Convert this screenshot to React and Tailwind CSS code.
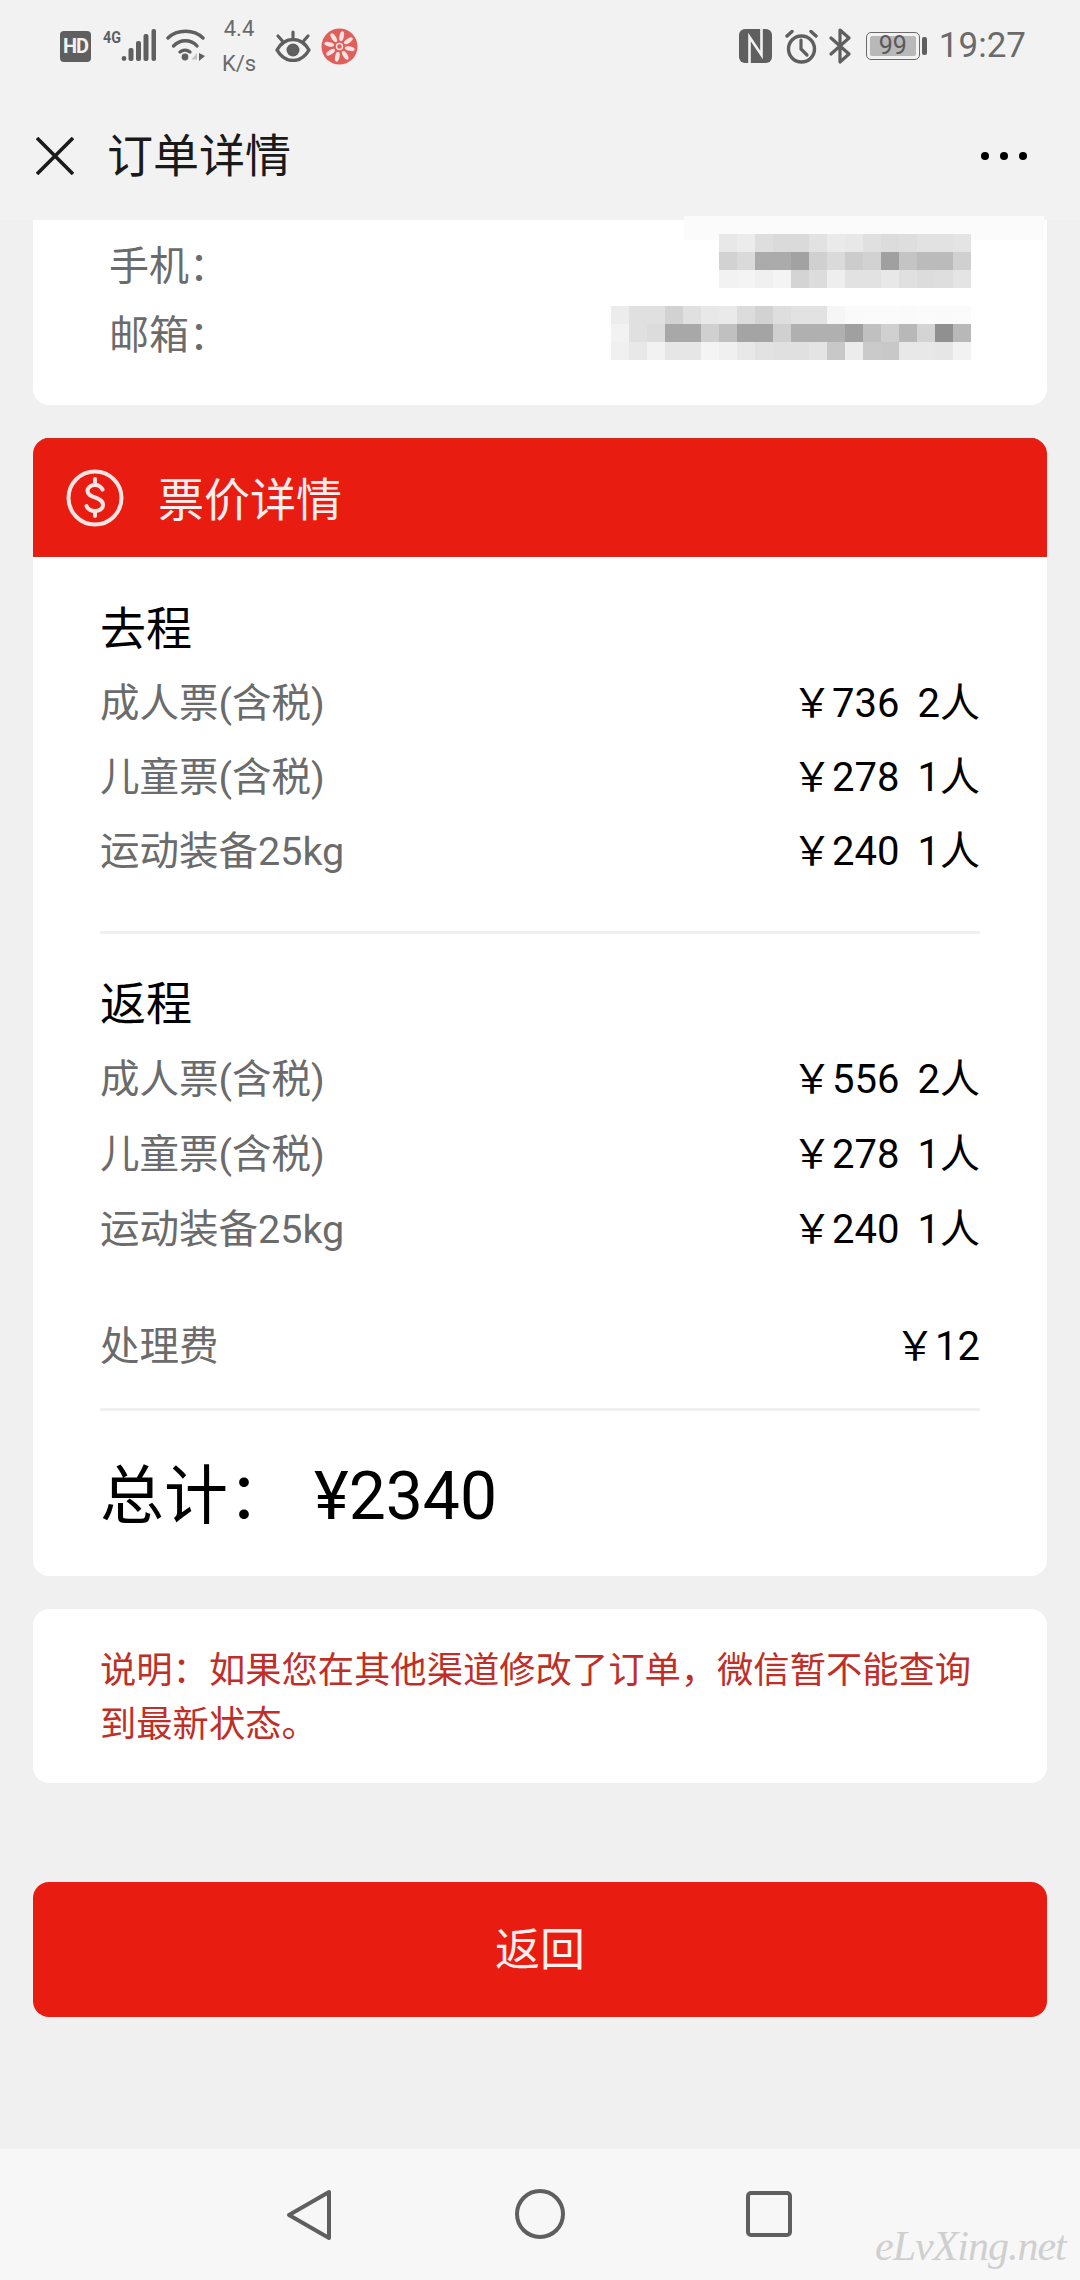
import React from 'react';

const phoneMosaic = [
  ['#e8e8e8', '#ececec', '#dedede', '#dadada', '#dadada', '#e2e2e2', '#eaeaea', '#e8e8e8', '#e0e0e0', '#dcdcdc', '#dedede', '#e2e2e2', '#e2e2e2', '#e4e4e4'],
  ['#d2d2d2', '#dadada', '#ababab', '#ababab', '#a2a2a2', '#d0d0d0', '#dadada', '#cccccc', '#d2d2d2', '#a0a0a0', '#c4c4c4', '#bbbbbb', '#bbbbbb', '#d0d0d0'],
  ['#f2f2f2', '#f4f4f4', '#f0f0f0', '#f4f4f4', '#d4d4d4', '#dcdcdc', '#eeeeee', '#e2e2e2', '#e2e2e2', '#e8e8e8', '#e0e0e0', '#dcdcdc', '#dedede', '#e4e4e4'],
];

const emailMosaic = [
  ['#ececec', '#e0e0e0', '#e0e0e0', '#d2d2d2', '#e0e0e0', '#e8e8e8', '#eaeaea', '#dcdcdc', '#d2d2d2', '#dedede', '#e2e2e2', '#e2e2e2', '#f6f6f6', '#fafafa', '#fbfbfb', '#fbfbfb', '#fafafa', '#fbfbfb', '#fafafa', '#fbfbfb'],
  ['#f2f2f2', '#e0e0e0', '#dcdcdc', '#a8a8a8', '#a8a8a8', '#d0d0d0', '#c0c0c0', '#a4a4a4', '#a4a4a4', '#d0d0d0', '#b0b0b0', '#b0b0b0', '#b0b0b0', '#a0a0a0', '#c0c0c0', '#d0d0d0', '#b8b8b8', '#d4d4d4', '#909090', '#b8b8b8'],
  ['#f0f0f0', '#e8e8e8', '#f2f2f2', '#e6e6e6', '#e6e6e6', '#f4f4f4', '#f0f0f0', '#e8e8e8', '#e2e2e2', '#e0e0e0', '#e0e0e0', '#e4e4e4', '#c8c8c8', '#ececec', '#cacaca', '#c8c8c8', '#e8e8e8', '#e8e8e8', '#e6e6e6', '#f2f2f2'],
];

function Mosaic({ rows, className }) {
  const size = 18;
  return (
    <svg className={className} width={rows[0].length * size} height={rows.length * size} shapeRendering="crispEdges">
      {rows.map((row, y) => row.map((c, x) => (
        <rect key={`${x}-${y}`} x={x * size} y={y * size} width={size} height={size} fill={c} />
      )))}
    </svg>
  );
}

function StatusLeft() {
  return (
    <div className="flex items-center text-[#5f5f5f]">
      <div className="w-[31px] h-[31px] rounded-[4px] bg-[#5f5f5f] text-[#f2f2f2] text-[20px] font-bold leading-[31px] text-center tracking-[-1px]">HD</div>
      <svg className="ml-[12px] mb-[4px]" width="53" height="38" viewBox="0 -4 53 38">
        <text x="0" y="14" fontSize="17" fontWeight="700" fill="#5f5f5f" fontFamily="Roboto" textLength="18" lengthAdjust="spacingAndGlyphs">4G</text>
        <circle cx="21" cy="29.500" r="2.400" fill="#5f5f5f" />
        <rect x="25.500" y="19" width="5" height="13" rx="2" fill="#5f5f5f" />
        <rect x="33" y="12" width="5" height="20" rx="2" fill="#5f5f5f" />
        <rect x="40.500" y="5" width="5" height="27" rx="2" fill="#5f5f5f" />
        <rect x="48.500" y="0" width="4.500" height="32" rx="2" fill="#5f5f5f" />
      </svg>
      <svg className="ml-[10px]" width="40" height="34" viewBox="0 0 40 34" fill="none" stroke="#5f5f5f" strokeLinecap="round">
        <path d="M2 9C11 0 28 0 37 9" strokeWidth="3.400" />
        <path d="M7.500 17C14 10 25 10 31 17" strokeWidth="3.400" />
        <path d="M14 23C17 20.500 21 20.500 24 23" strokeWidth="3.400" />
        <circle cx="19" cy="28" r="3.400" fill="#5f5f5f" stroke="none" />
        <path d="M31 24L25.500 30.500H31Z" fill="#c4c4c4" stroke="none" />
        <path d="M33 24V32L39 27Z" fill="#5f5f5f" stroke="none" />
      </svg>
      <div className="ml-[13px] w-[40px] text-center text-[22px] leading-[35px] text-[#6a6a6a]">
        <div>4.4</div>
        <div>K/s</div>
      </div>
      <svg className="ml-[16px]" width="36" height="32" viewBox="0 0 36 32" fill="none" stroke="#5f5f5f">
        <path d="M2 20C10 6 26 6 34 20C26 34 10 34 2 20Z" strokeWidth="3.400" strokeLinejoin="round" />
        <circle cx="18" cy="20" r="6.500" fill="#5f5f5f" stroke="none" />
        <path d="M18 2V7M3 6L7 10.500M33 6L29 10.500" strokeWidth="3.200" strokeLinecap="round" />
      </svg>
      <svg className="ml-[10px]" width="37" height="37" viewBox="0 0 37 37">
        <circle cx="18.500" cy="18.500" r="18" fill="#df5f5c" />
        <g fill="#fbe3e1">
          <ellipse cx="18.500" cy="8" rx="2.200" ry="5" transform="rotate(12 18.500 18.500)" />
          <ellipse cx="18.500" cy="8" rx="2.200" ry="5" transform="rotate(57 18.500 18.500)" />
          <ellipse cx="18.500" cy="8" rx="2.200" ry="5" transform="rotate(102 18.500 18.500)" />
          <ellipse cx="18.500" cy="8" rx="2.200" ry="5" transform="rotate(147 18.500 18.500)" />
          <ellipse cx="18.500" cy="8" rx="2.200" ry="5" transform="rotate(192 18.500 18.500)" />
          <ellipse cx="18.500" cy="8" rx="2.200" ry="5" transform="rotate(237 18.500 18.500)" />
          <ellipse cx="18.500" cy="8" rx="2.200" ry="5" transform="rotate(282 18.500 18.500)" />
          <ellipse cx="18.500" cy="8" rx="2.200" ry="5" transform="rotate(327 18.500 18.500)" />
        </g>
        <circle cx="18.500" cy="18.500" r="3" fill="none" stroke="#fbe3e1" strokeWidth="1.400" />
      </svg>
    </div>
  );
}

function StatusRight() {
  return (
    <div className="flex items-center text-[#5f5f5f]">
      <svg width="33" height="34" viewBox="0 0 33 34">
        <rect x="0" y="0" width="33" height="34" rx="6" fill="#5f5f5f" />
        <path d="M10.500 34V8L22.500 26V0" fill="none" stroke="#f2f2f2" strokeWidth="2.600" />
      </svg>
      <svg className="ml-[13px]" width="33" height="35" viewBox="0 0 33 35" fill="none" stroke="#5f5f5f" strokeLinecap="round">
        <circle cx="16.500" cy="20" r="13" strokeWidth="3.400" />
        <path d="M16 11V20L22 26" strokeWidth="3.200" />
        <path d="M2 7L7 2.500M31 7L26 2.500" strokeWidth="3.400" />
      </svg>
      <svg className="ml-[11px]" width="22" height="36" viewBox="0 0 22 36" fill="none" stroke="#5f5f5f" strokeWidth="3.200" strokeLinecap="round" strokeLinejoin="round">
        <path d="M2 10L20 26L11 34V2L20 10L2 26" />
      </svg>
      <div className="ml-[15px] w-[54px] h-[28px] rounded-[5px] border-[1.5px] border-[#6a6a6a] p-[3px]">
        <div className="h-full rounded-[2px] bg-[#b8b8b8] text-[#5a5a5a] text-[25px] leading-[19px] text-center">99</div>
      </div>
      <div className="ml-[2px] w-[5px] h-[18px] rounded-[2px] bg-[#5f5f5f]" />
      <div className="ml-[12px] text-[35px] leading-[40px] text-[#6a6a6a]">19:27</div>
    </div>
  );
}

function NavBar() {
  return (
    <div className="h-[128px] pl-[36px] pr-[53px] flex items-center">
      <svg width="38" height="38" viewBox="0 0 38 38" stroke="#1a1a1a" strokeWidth="3.600">
        <path d="M1 1L37 37M37 1L1 37" />
      </svg>
      <div className="ml-[33px] text-[46px] text-[#1a1a1a]">订单详情</div>
      <div className="ml-auto flex gap-[11px]">
        <div className="w-[8px] h-[8px] rounded-full bg-black" />
        <div className="w-[8px] h-[8px] rounded-full bg-black" />
        <div className="w-[8px] h-[8px] rounded-full bg-black" />
      </div>
    </div>
  );
}

function Row({ label, price, count, height = 'h-[74px]' }) {
  return (
    <div className={`${height} flex items-center justify-between`}>
      <div className="text-[39.5px] text-[#6b6b6b]">{label}</div>
      <div className="flex items-center text-[40px] text-black">
        <span>￥{price}</span>
        {count && <span className="ml-[18px]">{count}</span>}
      </div>
    </div>
  );
}

function Divider() {
  return <div className="h-[3px] bg-[#f0f0f0]" />;
}

function ContactCard() {
  return (
    <div className="relative h-[185px] bg-white rounded-b-[16px] pl-[76px] pr-[76px] pt-[13px] text-[40px] text-[#6b6b6b]">
      {/* off-white smear the screenshot has around the blurred values */}
      <div className="absolute right-[3px] top-[-4px] w-[360px] h-[24px] bg-[#fbfbfb]" />
      <div className="relative h-[67px] flex items-center justify-between">
        <div>手机：</div>
        <Mosaic rows={phoneMosaic} className="mb-[11px]" />
      </div>
      <div className="relative h-[71px] flex items-center justify-between">
        <div>邮箱：</div>
        <Mosaic rows={emailMosaic} className="mb-[5px]" />
      </div>
    </div>
  );
}

function PriceCard() {
  return (
    <div className="mt-[33px] h-[1138px] bg-white rounded-[16px] overflow-hidden">
      <div className="h-[119px] bg-[#e81c10] border-y-[2px] border-[#d2281e] pl-[33px] flex items-center">
        <svg width="58" height="58" viewBox="0 0 58 58" fill="none" stroke="#fbe4e2" strokeWidth="4">
          <circle cx="29" cy="29" r="26.500" />
          <path d="M36.500 20.500C35 17.500 32.500 16 29 16C25 16 21.500 18.500 21.500 22C21.500 29.500 37 27.500 37 36C37 39.500 33.500 42 29 42C25 42 22 40.500 20.500 37" strokeLinecap="round" />
          <path d="M29 10V16M29 42V47" strokeLinecap="round" />
        </svg>
        <div className="ml-[34px] mt-[5px] text-[46px] text-[#fdeeed]">票价详情</div>
      </div>
      <div className="px-[67px]">
        <div className="mt-[40px] mb-[6px] h-[64px] flex items-center text-[46px] text-black">去程</div>
        <Row label="成人票(含税)" price="736" count="2人" />
        <Row label="儿童票(含税)" price="278" count="1人" />
        <Row label="运动装备25kg" price="240" count="1人" />
        <div className="mt-[42px]"><Divider /></div>
        <div className="mt-[38px] mb-[6px] h-[64px] flex items-center text-[46px] text-black">返程</div>
        <Row label="成人票(含税)" price="556" count="2人" height="h-[75px]" />
        <Row label="儿童票(含税)" price="278" count="1人" height="h-[75px]" />
        <Row label="运动装备25kg" price="240" count="1人" height="h-[75px]" />
        <div className="mt-[43px]"><Row label="处理费" price="12" /></div>
        <div className="mt-[24px]"><Divider /></div>
        <div className="mt-[46px] h-[80px] flex items-center text-[64px] leading-none text-black">
          <span>总计：</span>
          <span className="ml-[22px] text-[66px]">¥2340</span>
        </div>
      </div>
    </div>
  );
}

function BottomBar() {
  return (
    <div className="relative h-[131px] bg-[#f7f7f7] flex items-start">
      <svg className="ml-[286px] mt-[40px]" width="46" height="52" viewBox="0 0 46 52" fill="none" stroke="#5f5f5f" strokeWidth="4" strokeLinejoin="round">
        <path d="M43 3V49L3 26Z" />
      </svg>
      <svg className="ml-[183px] mt-[40px]" width="50" height="50" viewBox="0 0 50 50" fill="none" stroke="#5f5f5f" strokeWidth="4">
        <circle cx="25" cy="25" r="23" />
      </svg>
      <svg className="ml-[181px] mt-[42px]" width="46" height="46" viewBox="0 0 46 46" fill="none" stroke="#5f5f5f" strokeWidth="4">
        <rect x="2" y="2" width="42" height="42" rx="3" />
      </svg>
      <div className="absolute left-[875px] top-[72px] font-['Liberation_Serif',serif] italic text-[42px] leading-[50px] tracking-[-1px] text-[#cfcfcf]">eLvXing.net</div>
    </div>
  );
}

export default function App() {
  return (
    <div className="w-[1080px] h-[2280px] flex flex-col bg-[#f0f0f0] font-[Roboto,'Noto_Sans_CJK_SC',sans-serif]">
      <div className="bg-[#f2f2f2]">
        <div className="h-[92px] pl-[60px] pr-[54px] flex items-center justify-between">
          <StatusLeft />
          <StatusRight />
        </div>
        <NavBar />
      </div>
      <div className="flex-1 px-[33px]">
        <ContactCard />
        <PriceCard />
        <div className="mt-[33px] h-[174px] bg-white rounded-[16px] pl-[67px] pr-[60px] pt-[35px] text-[36.300px] leading-[54px] text-[#bf2f28]">
          说明：如果您在其他渠道修改了订单，微信暂不能查询到最新状态。
        </div>
        <div className="mt-[99px] h-[135px] pt-[2px] bg-[#e81c10] rounded-[16px] flex items-center justify-center text-[45px] text-[#fdeeed]">返回</div>
      </div>
      <BottomBar />
    </div>
  );
}
